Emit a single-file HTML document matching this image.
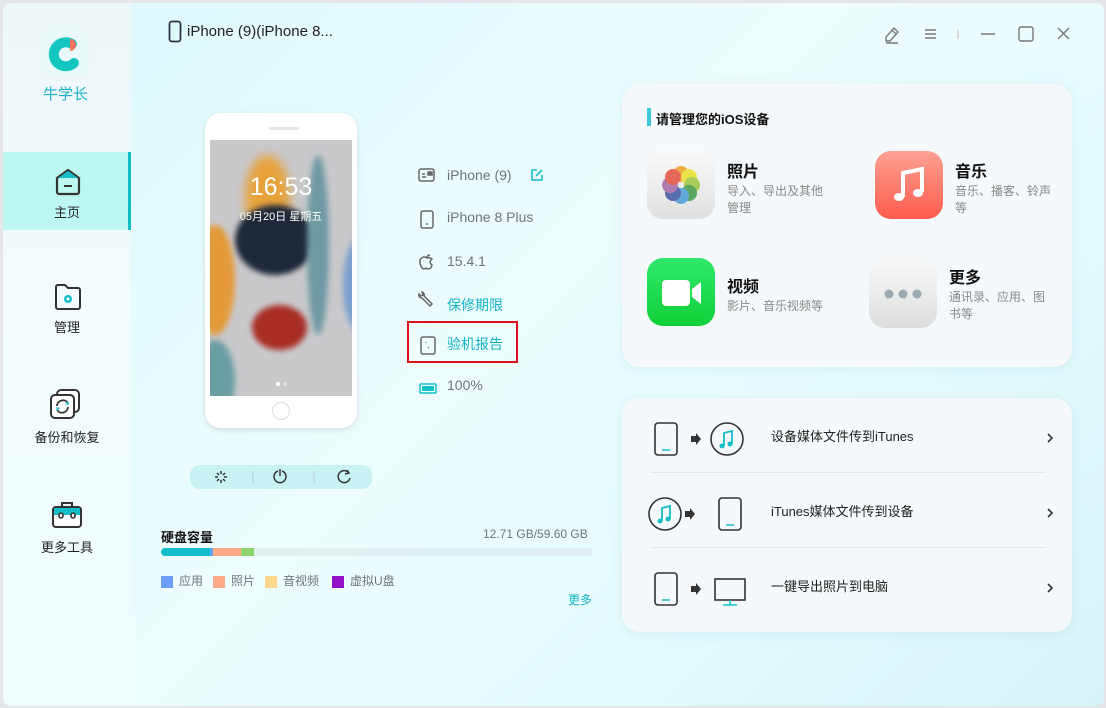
<!DOCTYPE html>
<html><head><meta charset="utf-8"><style>
*{margin:0;padding:0;box-sizing:border-box}
body{width:1106px;height:708px;overflow:hidden;background:#e4e6ea;font-family:"Liberation Sans","Noto Sans CJK SC",sans-serif;position:relative}
.win{position:absolute;left:3px;top:3px;width:1101px;height:703px;border-radius:8px;overflow:hidden;background:linear-gradient(135deg,#dcf8fb 0%,#eefdfe 45%,#e6fbfd 70%,#d8f3f7 100%)}
.side{position:absolute;left:0;top:0;width:128px;height:703px;background:linear-gradient(180deg,#eef7fa,#f3fbfd 40%,#effdfe)}
.abs{position:absolute}
.nav{position:absolute;left:0;width:128px;text-align:center;font-size:13px;color:#222}
.card{position:absolute;background:rgba(246,248,251,.92);border-radius:18px;box-shadow:0 2px 10px rgba(150,200,210,.25)}
.t{position:absolute;white-space:nowrap}
.ic{position:absolute;width:68px;height:68px;border-radius:16px}
.gray{color:#6c7480}
</style></head><body>
<div class="win">
<div class="side">
  <div class="abs" style="left:39px;top:27px;width:47px;height:47px;border-radius:10px;background:#eafafa">
    <svg width="47" height="47" viewBox="0 0 47 47"><path d="M30 14 A12 12 0 1 0 32 33" fill="none" stroke="#14c6c0" stroke-width="10" stroke-linecap="round"/><path d="M28 9 a6 6 0 0 1 0 12z" fill="#f7735c"/></svg>
  </div>
  <div class="t" style="left:40px;top:80px;font-size:15px;color:#1ab4c8">牛学长</div>
  <div class="abs" style="left:0;top:149px;width:128px;height:78px;background:#bdf7f1"></div>
  <div class="abs" style="left:125px;top:149px;width:3px;height:78px;background:#10bcc6"></div>
  <svg class="abs" style="left:50px;top:164px" width="30" height="30" viewBox="0 0 30 30"><path d="M4 11 L15 3 L26 11 V25 a2 2 0 0 1 -2 2 H6 a2 2 0 0 1 -2 -2z" fill="none" stroke="#333" stroke-width="2.2"/><path d="M5 11 L15 4 L25 11z" fill="#14bfca"/><path d="M11 19 H19" stroke="#333" stroke-width="2"/></svg>
  <div class="nav" style="top:199px">主页</div>
  <svg class="abs" style="left:50px;top:280px" width="30" height="28" viewBox="0 0 30 28"><path d="M3 4 a2 2 0 0 1 2-2 H12 l3 3 H25 a2 2 0 0 1 2 2 V24 a2 2 0 0 1 -2 2 H5 a2 2 0 0 1 -2 -2z" fill="none" stroke="#333" stroke-width="2"/><circle cx="15" cy="16" r="4" fill="#14bfca"/><circle cx="15" cy="16" r="1.5" fill="#fff"/></svg>
  <div class="nav" style="top:314px">管理</div>
  <svg class="abs" style="left:46px;top:385px" width="34" height="34" viewBox="0 0 34 34"><rect x="8" y="2" width="22" height="22" rx="4" fill="#fff" stroke="#333" stroke-width="2"/><rect x="2" y="7" width="23" height="23" rx="4" fill="#fff" stroke="#333" stroke-width="2"/><path d="M8 18 a6 6 0 0 1 11 -3 M19 19 a6 6 0 0 1 -11 3" fill="none" stroke="#333" stroke-width="1.8"/><path d="M19 13 l1 4 l-4 -1z M8 23 l-1 -4 l4 1z" fill="#14bfca"/></svg>
  <div class="nav" style="top:424px">备份和恢复</div>
  <svg class="abs" style="left:48px;top:497px" width="32" height="30" viewBox="0 0 32 30"><path d="M11 7 V3 H21 V7" fill="none" stroke="#333" stroke-width="2"/><rect x="2" y="7" width="28" height="20" rx="3" fill="#fff" stroke="#333" stroke-width="2"/><path d="M3 8 H29 V15 H3z" fill="#14bfca"/><rect x="8" y="13" width="4" height="5" rx="2" fill="#fff" stroke="#333" stroke-width="1.6"/><rect x="20" y="13" width="4" height="5" rx="2" fill="#fff" stroke="#333" stroke-width="1.6"/></svg>
  <div class="nav" style="top:534px">更多工具</div>
</div>

<svg class="abs" style="left:165px;top:17px" width="14" height="24" viewBox="0 0 14 24"><rect x="1.5" y="1.5" width="11" height="20" rx="2.5" fill="none" stroke="#2b3346" stroke-width="1.8"/></svg>
<div class="t" style="left:184px;top:20px;font-size:15px;color:#222">iPhone (9)(iPhone 8...</div>

<svg class="abs" style="left:880px;top:20px" width="200" height="22" viewBox="0 0 200 22">
<g fill="none" stroke="#777" stroke-width="1.4"><path d="M3 14 L11 5 L15 9 L7 18 L3 18z M9 7 l4 4"/><path d="M3 20 H15"/><path d="M42 7 H53 M42 11 H53 M42 15 H53"/><path d="M75 7 V16" stroke="#ccc"/><path d="M98 11 H112"/><rect x="136" y="4" width="14" height="14" rx="2"/><path d="M175 5 L186 16 M186 5 L175 16"/></g></svg>

<!-- phone -->
<div class="abs" style="left:202px;top:110px;width:152px;height:315px;border-radius:16px;background:#fff;box-shadow:0 2px 6px rgba(0,0,0,.12)"></div>
<div class="abs" style="left:266px;top:124px;width:30px;height:3px;border-radius:2px;background:#e4e6ea"></div>
<div class="abs" style="left:207px;top:137px;width:142px;height:256px;overflow:hidden;background:#c9c9cc">
  <div class="abs" style="left:35px;top:15px;width:45px;height:85px;border-radius:50%;background:#e8a23c;filter:blur(5px)"></div>
  <div class="abs" style="left:25px;top:65px;width:80px;height:70px;border-radius:50%;background:#1e2838;filter:blur(3px)"></div>
  <div class="abs" style="left:-15px;top:85px;width:40px;height:110px;border-radius:50%;background:#e59a3a;filter:blur(3px)"></div>
  <div class="abs" style="left:97px;top:15px;width:22px;height:180px;border-radius:50%;background:#6f99a3;filter:blur(3px)"></div>
  <div class="abs" style="left:133px;top:95px;width:40px;height:100px;border-radius:50%;background:#7a9fcf;filter:blur(3px)"></div>
  <div class="abs" style="left:42px;top:165px;width:55px;height:45px;border-radius:50%;background:#a82e26;filter:blur(3px)"></div>
  <div class="abs" style="left:-15px;top:200px;width:40px;height:80px;border-radius:50%;background:#6a9ea3;filter:blur(3px)"></div>
  <div class="t" style="left:0;width:142px;text-align:center;top:33px;font-size:25px;color:#fff;font-weight:300">16:53</div>
  <div class="t" style="left:0;width:142px;text-align:center;top:68px;font-size:11px;color:#fff">05月20日 星期五</div>
  <div class="abs" style="left:66px;top:242px;width:4px;height:4px;border-radius:50%;background:#fff"></div>
  <div class="abs" style="left:73px;top:242px;width:4px;height:4px;border-radius:50%;background:#ddd"></div>
</div>
<div class="abs" style="left:269px;top:399px;width:18px;height:18px;border-radius:50%;border:1px solid #ddd"></div>

<div class="abs" style="left:187px;top:462px;width:182px;height:24px;border-radius:10px;background:#c8f2f3"></div>
<svg class="abs" style="left:187px;top:462px" width="182" height="24" viewBox="0 0 182 24"><g stroke="#333" stroke-width="1.5" fill="none"><path d="M31 6 V9 M31 15 V18 M25 12 H28 M34 12 H37 M27 8 L29 10 M33 14 L35 16 M35 8 L33 10 M29 14 L27 16"/><path d="M88 6 a6 6 0 1 0 4 0 M90 4 V11"/><path d="M159 8 a6 6 0 1 0 1 5 M157 5 L159 8 L155 9"/></g><path d="M63 6 V18 M124 6 V18" stroke="#bcd" stroke-width="1"/></svg>

<!-- info list -->
<svg class="abs" style="left:415px;top:163px" width="20" height="230" viewBox="0 0 20 230"><g fill="none" stroke="#666" stroke-width="1.5"><rect x="1" y="3" width="15" height="12" rx="2"/><path d="M4 11 H8 M4 8 H7"/><rect x="10" y="6" width="4" height="3" fill="#666"/><rect x="3" y="45" width="12" height="17" rx="2"/><path d="M8 58 H10"/><path d="M9 92 c-2-2 -8-1 -7 5 c1 6 4 7 6 5 c2 2 5 1 6-3 c-3-2 -2-5 0-6 c-2-2 -4-1 -5-1z M9 92 c0-2 1-3 3-3"/><path d="M4 132 l8 8 l2-2 l-8-8 a3 3 0 0 0 -2-4 l1 3 l-2 1 l-2-2 a3 3 0 0 0 3 4" /><rect x="3" y="171" width="14" height="17" rx="2"/></g><rect x="2" y="218" width="16" height="9" rx="1" fill="none" stroke="#14bfca" stroke-width="1.5"/><rect x="4" y="220" width="12" height="5" fill="#14bfca"/><path d="M8 176 v1 M10 181 l1 1" stroke="#666"/></svg>
<div class="t gray" style="left:444px;top:164px;font-size:14px">iPhone (9)</div>
<svg class="abs" style="left:527px;top:165px" width="14" height="14" viewBox="0 0 14 14"><path d="M7 2 H2 V12 H12 V7 M6 8 L12 2" fill="none" stroke="#14bfca" stroke-width="1.6"/></svg>
<div class="t gray" style="left:444px;top:206px;font-size:14px">iPhone 8 Plus</div>
<div class="t gray" style="left:444px;top:250px;font-size:14px">15.4.1</div>
<div class="t" style="left:444px;top:292px;font-size:14px;color:#14b4c4">保修期限</div>
<div class="abs" style="left:404px;top:318px;width:111px;height:42px;border:2px solid #e0101a"></div>
<div class="t" style="left:444px;top:331px;font-size:14px;color:#14b4c4">验机报告</div>
<div class="t gray" style="left:444px;top:374px;font-size:14px">100%</div>

<!-- storage -->
<div class="t" style="left:158px;top:524px;font-size:13px;font-weight:bold;color:#111">硬盘容量</div>
<div class="t gray" style="left:480px;top:524px;font-size:12px">12.71 GB/59.60 GB</div>
<div class="abs" style="left:158px;top:545px;width:431px;height:8px;border-radius:4px;background:#e2f0f1;overflow:hidden">
<div class="abs" style="left:0;width:49px;height:8px;background:#10bfca"></div><div class="abs" style="left:49px;width:3px;height:8px;background:#6f9ef5"></div><div class="abs" style="left:52px;width:28px;height:8px;background:#fea988"></div><div class="abs" style="left:80px;width:13px;height:8px;background:#8dd36a"></div></div>
<div class="abs" style="left:158px;top:573px;width:12px;height:12px;background:#6e9ffb"></div><div class="t gray" style="left:176px;top:569px;font-size:12px">应用</div>
<div class="abs" style="left:210px;top:573px;width:12px;height:12px;background:#feaa88"></div><div class="t gray" style="left:228px;top:569px;font-size:12px">照片</div>
<div class="abs" style="left:262px;top:573px;width:12px;height:12px;background:#fed88a"></div><div class="t gray" style="left:280px;top:569px;font-size:12px">音视频</div>
<div class="abs" style="left:329px;top:573px;width:12px;height:12px;background:#9410c8"></div><div class="t gray" style="left:347px;top:569px;font-size:12px">虚拟U盘</div>
<div class="t" style="left:565px;top:588px;font-size:12px;color:#14b4c4">更多</div>

<!-- manage card -->
<div class="card" style="left:619px;top:81px;width:450px;height:283px"></div>
<div class="abs" style="left:644px;top:105px;width:4px;height:18px;background:#3cc8d8"></div>
<div class="t" style="left:653px;top:106px;font-size:13px;font-weight:bold;color:#111">请管理您的iOS设备</div>
<div class="ic" style="left:644px;top:148px;background:linear-gradient(#fafafa,#e0e0e0)"><svg width="68" height="68" viewBox="0 0 68 68"><g opacity=".85"><circle cx="34" cy="23" r="8" fill="#f3a127"/><circle cx="42" cy="26" r="8" fill="#e8e12e"/><circle cx="45" cy="34" r="8" fill="#9cc540"/><circle cx="42" cy="42" r="8" fill="#3f9a4b"/><circle cx="34" cy="45" r="8" fill="#4a9fd6"/><circle cx="26" cy="42" r="8" fill="#3e58a3"/><circle cx="23" cy="34" r="8" fill="#a56aa8"/><circle cx="26" cy="26" r="8" fill="#e4503e"/></g></svg></div>
<div class="t" style="left:724px;top:155px;font-size:16px;font-weight:bold;color:#111">照片</div>
<div class="t" style="left:724px;top:180px;font-size:12px;color:#888;line-height:17px">导入、导出及其他<br>管理</div>
<div class="ic" style="left:872px;top:148px;background:linear-gradient(#fca194,#fc5c4c)"><svg width="68" height="68" viewBox="0 0 68 68"><path d="M28 46 V22 L47 18 V41" fill="none" stroke="#fff" stroke-width="4"/><ellipse cx="24" cy="46" rx="5" ry="4" fill="#fff"/><ellipse cx="43" cy="42" rx="5" ry="4" fill="#fff"/></svg></div>
<div class="t" style="left:952px;top:155px;font-size:16px;font-weight:bold;color:#111">音乐</div>
<div class="t" style="left:952px;top:180px;font-size:12px;color:#888;line-height:17px">音乐、播客、铃声<br>等</div>
<div class="ic" style="left:644px;top:255px;background:linear-gradient(#30e86c,#10d038)"><svg width="68" height="68" viewBox="0 0 68 68"><rect x="15" y="22" width="28" height="26" rx="4" fill="#fff"/><path d="M45 31 L54 24 V46 L45 39z" fill="#fff"/></svg></div>
<div class="t" style="left:724px;top:270px;font-size:16px;font-weight:bold;color:#111">视频</div>
<div class="t" style="left:724px;top:294px;font-size:12px;color:#888">影片、音乐视频等</div>
<div class="ic" style="left:866px;top:257px;background:linear-gradient(#f8f8f8,#dcdede)"><svg width="68" height="68" viewBox="0 0 68 68"><circle cx="20" cy="34" r="4.5" fill="#98aab2"/><circle cx="34" cy="34" r="4.5" fill="#98aab2"/><circle cx="48" cy="34" r="4.5" fill="#98aab2"/></svg></div>
<div class="t" style="left:946px;top:261px;font-size:16px;font-weight:bold;color:#111">更多</div>
<div class="t" style="left:946px;top:286px;font-size:12px;color:#888;line-height:17px">通讯录、应用、图<br>书等</div>

<!-- transfer card -->
<div class="card" style="left:619px;top:395px;width:450px;height:234px"></div>
<div class="abs" style="left:648px;top:469px;width:395px;height:1px;background:#dcebf0"></div>
<div class="abs" style="left:648px;top:544px;width:395px;height:1px;background:#dcebf0"></div>
<svg class="abs" style="left:640px;top:410px" width="420" height="210" viewBox="0 0 420 210">
<g fill="none" stroke="#333" stroke-width="1.6">
<rect x="12" y="10" width="22" height="32" rx="3"/><circle cx="84" cy="26" r="16"/>
<circle cx="22" cy="101" r="16"/><rect x="76" y="85" width="22" height="32" rx="3"/>
<rect x="12" y="160" width="22" height="32" rx="3"/><rect x="72" y="166" width="30" height="21"/>
<path d="M405 21 l4 4 l-4 4 M405 96 l4 4 l-4 4 M405 171 l4 4 l-4 4"/>
</g>
<g stroke="#14bfca" stroke-width="1.6" fill="none"><path d="M19 37 H27 M83 112 H91 M19 187 H27 M80 192 H94 M87 187 V192"/></g>
<g fill="#14bfca"><path d="M81 33 V20 L89 18 V31" stroke="#14bfca" stroke-width="1.8" fill="none"/><circle cx="79" cy="33" r="2.5"/><circle cx="87" cy="31" r="2.5"/><path d="M19 108 V95 L27 93 V106" stroke="#14bfca" stroke-width="1.8" fill="none"/><circle cx="17" cy="108" r="2.5"/><circle cx="25" cy="106" r="2.5"/></g>
<g fill="#333"><path d="M48 23 H53 V20 L58 26 L53 32 V29 H48z M42 98 H47 V95 L52 101 L47 107 V104 H42z M48 173 H53 V170 L58 176 L53 182 V179 H48z"/></g>
</svg>
<div class="t" style="left:768px;top:423px;font-size:13px;color:#222">设备媒体文件传到iTunes</div>
<div class="t" style="left:768px;top:498px;font-size:13px;color:#222">iTunes媒体文件传到设备</div>
<div class="t" style="left:768px;top:573px;font-size:13px;color:#222">一键导出照片到电脑</div>
</div>
</body></html>
